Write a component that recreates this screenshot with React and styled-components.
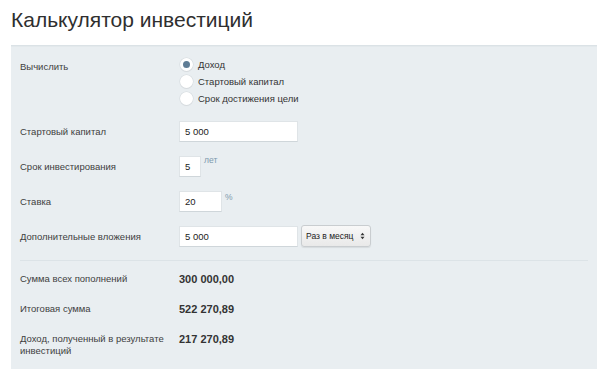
import React, { useState } from "react";
import styled, { createGlobalStyle } from "styled-components";

const GlobalStyle = createGlobalStyle`
  body {
    margin: 0;
    background: #fff;
    font-family: "Liberation Sans", Arial, sans-serif;
    color: #333;
  }
`;

const Page = styled.div`
  width: 605px;
  height: 381px;
  padding: 0 8px 0 11px;
  box-sizing: border-box;
  overflow: hidden;
`;

const Title = styled.h1`
  margin: 0;
  padding-top: 7px;
  height: 38px;
  font-size: 21px;
  line-height: 26px;
  font-weight: 400;
  color: #2f2f2f;
`;

const Panel = styled.div`
  background: #e9eef1;
  border-top: 1px solid #dbe2e6;
  box-shadow: 0 1px 0 #e3e9ec inset;
  padding: 10px 9px 12px;
`;

const Form = styled.div`
  display: flex;
  flex-direction: column;
  gap: 14px;
`;

const Row = styled.div`
  display: grid;
  grid-template-columns: 159px 1fr;
  align-items: ${(p) => (p.top ? "start" : "center")};
`;

const Label = styled.div`
  font-size: 9.5px;
  line-height: 12px;
  color: #404040;
  padding-top: ${(p) => p.offset || 0}px;
`;

const RadioGroup = styled.div`
  display: flex;
  flex-direction: column;
`;

const RadioOption = styled.label`
  display: flex;
  align-items: center;
  gap: 5px;
  height: 17px;
  font-size: 9.5px;
  color: #333;
  cursor: pointer;
`;

const RadioDot = styled.span`
  width: 13px;
  height: 13px;
  border-radius: 50%;
  box-sizing: border-box;
  background: ${(p) => (p.checked ? "#5f7d95" : "#fff")};
  border: ${(p) => (p.checked ? "3px solid #fff" : "none")};
  box-shadow: 0 0 0 0.5px #d3d9dd, 0 1px 1px rgba(0, 0, 0, 0.08);
  margin-left: 1px;
`;

const Controls = styled.div`
  display: flex;
  align-items: flex-start;
  gap: 3px;
`;

const Input = styled.div`
  width: ${(p) => p.w}px;
  height: 21px;
  box-sizing: border-box;
  background: #fff;
  border: 1px solid #dfe4e7;
  border-bottom-color: #cfd6da;
  font-size: 9.5px;
  line-height: 19px;
  padding-left: 5px;
  color: #222;
`;

const Suffix = styled.span`
  font-size: 8.5px;
  color: #7d99ad;
  margin-top: ${(p) => p.top || 0}px;
`;

const Select = styled.div`
  width: 70px;
  height: 22px;
  box-sizing: border-box;
  border: 1px solid #c9cdd0;
  border-radius: 3px;
  background: linear-gradient(#f8f8f8, #e9e9e9);
  box-shadow: 0 1px 1px rgba(0, 0, 0, 0.08);
  display: flex;
  align-items: center;
  justify-content: space-between;
  padding: 0 5px 0 4px;
  font-size: 8.5px;
  white-space: nowrap;
  color: #222;
  margin-top: -1px;
`;

const Divider = styled.div`
  height: 1px;
  background: #dce3e7;
  margin: 13px 0 0;
`;

const Results = styled.div`
  display: flex;
  flex-direction: column;
  gap: 16px;
  padding-top: 11px;
`;

const ResultRow = styled.div`
  display: grid;
  grid-template-columns: 150px 1fr;
  column-gap: 9px;
  align-items: start;
`;

const Value = styled.div`
  font-size: 11px;
  line-height: 14px;
  font-weight: 700;
  color: #333;
`;

const Arrows = () => (
  <svg width="5" height="8" viewBox="0 0 5 8">
    <path d="M0.5 3.2 L2.5 0.8 L4.5 3.2 Z" fill="#333" />
    <path d="M0.5 4.8 L2.5 7.2 L4.5 4.8 Z" fill="#333" />
  </svg>
);

const options = ["Доход", "Стартовый капитал", "Срок достижения цели"];

const results = [
  ["Сумма всех пополнений", "300 000,00"],
  ["Итоговая сумма", "522 270,89"],
  ["Доход, полученный в результате инвестиций", "217 270,89"],
];

export default function App() {
  const [mode, setMode] = useState(0);

  return (
    <Page>
      <GlobalStyle />
      <Title>Калькулятор инвестиций</Title>
      <Panel>
        <Form>
          <Row top>
            <Label offset={5}>Вычислить</Label>
            <RadioGroup>
              {options.map((o, i) => (
                <RadioOption key={o} onClick={() => setMode(i)}>
                  <RadioDot checked={mode === i} />
                  {o}
                </RadioOption>
              ))}
            </RadioGroup>
          </Row>
          <Row>
            <Label>Стартовый капитал</Label>
            <Controls>
              <Input w={119}>5 000</Input>
            </Controls>
          </Row>
          <Row>
            <Label>Срок инвестирования</Label>
            <Controls>
              <Input w={22}>5</Input>
              <Suffix top={-1}>лет</Suffix>
            </Controls>
          </Row>
          <Row>
            <Label>Ставка</Label>
            <Controls>
              <Input w={43}>20</Input>
              <Suffix top={1}>%</Suffix>
            </Controls>
          </Row>
          <Row>
            <Label>Дополнительные вложения</Label>
            <Controls>
              <Input w={119}>5 000</Input>
              <Select>
                Раз в месяц
                <Arrows />
              </Select>
            </Controls>
          </Row>
        </Form>
        <Divider />
        <Results>
          {results.map(([l, v]) => (
            <ResultRow key={l}>
              <Label offset={1}>{l}</Label>
              <Value>{v}</Value>
            </ResultRow>
          ))}
        </Results>
      </Panel>
    </Page>
  );
}
